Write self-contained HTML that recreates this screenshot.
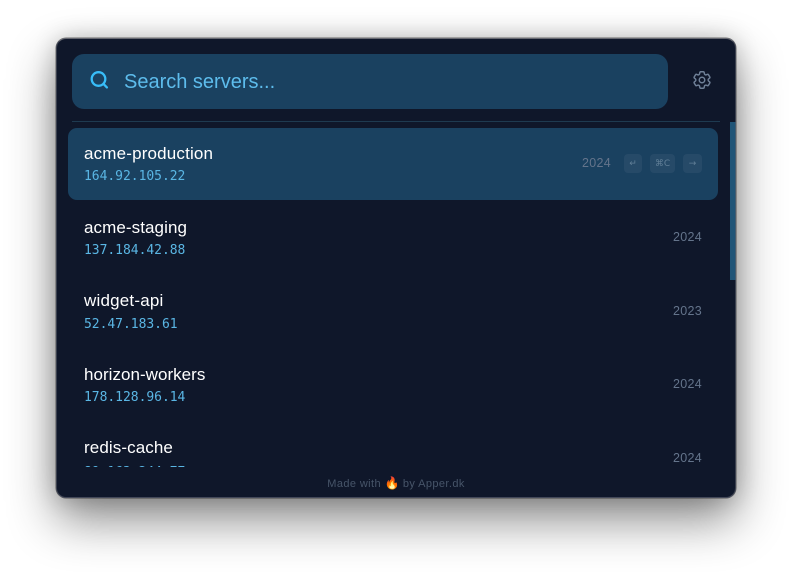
<!DOCTYPE html>
<html>
<head>
<meta charset="utf-8">
<style>
html,body{margin:0;padding:0;width:792px;height:572px;overflow:hidden;background:#fff;}
body{position:relative;font-family:"Liberation Sans",sans-serif;}
.win{position:absolute;left:56px;top:38px;width:680px;height:460px;background:#0f172a;border-radius:10px;overflow:hidden;box-sizing:border-box;}
.shadow{position:absolute;left:56px;top:38px;width:680px;height:460px;border-radius:10px;box-shadow:0 22px 48px rgba(0,0,0,.46),0 0 24px rgba(0,0,0,.2),0 0 0 .5px rgba(0,0,0,.5);}
.edge{position:absolute;left:56px;top:38px;width:680px;height:460px;border-radius:10px;box-sizing:border-box;border:1px solid rgba(120,125,135,.55);border-color:rgba(140,140,145,.7) rgba(90,95,105,.6) rgba(90,95,110,.7);pointer-events:none;}
.abs{position:absolute;}
.search{left:16px;top:16px;width:596px;height:55px;background:#1a4160;border-radius:12px;}
.ph{left:68px;top:32px;font-size:20px;line-height:24px;color:#5dbcec;white-space:nowrap;}
.div{left:16px;top:83px;width:648px;height:1px;background:#1e3a50;}
.sel{left:12px;top:90px;width:650px;height:72px;background:#1a4160;border-radius:9px;}
.name{left:28px;font-size:17px;line-height:20px;color:#fff;white-space:nowrap;letter-spacing:.17px;}
.ip{left:28px;font-family:"DejaVu Sans Mono",monospace;font-size:13px;line-height:16px;color:#5ab6e4;white-space:nowrap;letter-spacing:-.03px;}
.yr{right:34px;font-size:12.5px;line-height:16px;color:#64748b;white-space:nowrap;letter-spacing:.3px;}
.key{top:116px;height:19px;background:#264a68;border-radius:4px;color:#617f97;font-family:"DejaVu Sans",sans-serif;font-size:9px;line-height:21px;text-align:center;}
.clip{left:0;top:84px;width:680px;height:345px;overflow:hidden;}
.sb{left:674px;top:84px;width:6px;height:158px;background:#1f5477;}
.foot{left:0;width:680px;top:438px;text-align:center;font-size:11px;line-height:16px;color:#475569;letter-spacing:.4px;white-space:nowrap;}
</style>
</head>
<body>
<div class="shadow"></div>
<div class="win">
  <div class="abs search"></div>
  <svg class="abs" style="left:32px;top:31px" width="22" height="22" viewBox="0 0 22 22" fill="none" stroke="#38bdf8" stroke-width="2.3" stroke-linecap="round"><circle cx="10.5" cy="10" r="6.8"/><path d="M15.6 15.1L18.9 18.4"/></svg>
  <div class="abs ph">Search servers...</div>
  <svg class="abs" style="left:635px;top:31px" width="22" height="22" viewBox="0 0 24 24" fill="none" stroke="#6f8097" stroke-width="1.6" stroke-linecap="round" stroke-linejoin="round"><path d="M9.594 3.94c.09-.542.56-.94 1.11-.94h2.593c.55 0 1.02.398 1.11.94l.213 1.281c.063.374.313.686.645.87.074.04.147.083.22.127.325.196.72.257 1.075.124l1.217-.456a1.125 1.125 0 0 1 1.37.49l1.296 2.247a1.125 1.125 0 0 1-.26 1.431l-1.003.827c-.293.241-.438.613-.43.992a7.723 7.723 0 0 1 0 .255c-.008.378.137.75.43.991l1.004.827c.424.35.534.955.26 1.43l-1.298 2.247a1.125 1.125 0 0 1-1.369.491l-1.217-.456c-.355-.133-.75-.072-1.076.124a6.47 6.47 0 0 1-.22.128c-.331.183-.581.495-.644.869l-.213 1.281c-.09.543-.56.94-1.11.94h-2.594c-.55 0-1.019-.398-1.11-.94l-.213-1.281c-.062-.374-.312-.686-.644-.87a6.52 6.52 0 0 1-.22-.127c-.325-.196-.72-.257-1.076-.124l-1.217.456a1.125 1.125 0 0 1-1.369-.49l-1.297-2.247a1.125 1.125 0 0 1 .26-1.431l1.004-.827c.292-.24.437-.613.43-.991a6.932 6.932 0 0 1 0-.255c.007-.38-.138-.751-.43-.992l-1.004-.827a1.125 1.125 0 0 1-.26-1.43l1.297-2.247a1.125 1.125 0 0 1 1.37-.491l1.216.456c.356.133.751.072 1.076-.124.072-.044.146-.086.22-.128.332-.183.582-.495.644-.869l.214-1.28Z"/><circle cx="12" cy="12" r="3"/></svg>
  <div class="abs div"></div>
  <div class="abs sel"></div>
  <div class="abs clip">
    <div class="abs name" style="top:22px">acme-production</div>
    <div class="abs ip" style="top:47px">164.92.105.22</div>
    <div class="abs name" style="top:96px;letter-spacing:.08px">acme-staging</div>
    <div class="abs ip" style="top:121px">137.184.42.88</div>
    <div class="abs name" style="top:169px;letter-spacing:.2px">widget-api</div>
    <div class="abs ip" style="top:195px">52.47.183.61</div>
    <div class="abs name" style="top:243px;letter-spacing:.03px">horizon-workers</div>
    <div class="abs ip" style="top:268px">178.128.96.14</div>
    <div class="abs name" style="top:316px;letter-spacing:.1px">redis-cache</div>
    <div class="abs ip" style="top:343px">89.163.244.77</div>
    <div class="abs yr" style="top:107px">2024</div>
    <div class="abs yr" style="top:181px">2023</div>
    <div class="abs yr" style="top:254px">2024</div>
    <div class="abs yr" style="top:328px">2024</div>
  </div>
  <div class="abs yr" style="top:117px;right:125px">2024</div>
  <div class="abs key" style="left:568px;width:18px">↵</div>
  <div class="abs key" style="left:594px;width:25px">⌘C</div>
  <div class="abs key" style="left:627px;width:19px">→</div>
  <div class="abs sb"></div>
  <div class="abs foot">Made with <span style="font-size:12px;letter-spacing:0;line-height:14px;color:#f97316">🔥</span> by Apper.dk</div>
</div>
<div class="edge"></div>
</body>
</html>
